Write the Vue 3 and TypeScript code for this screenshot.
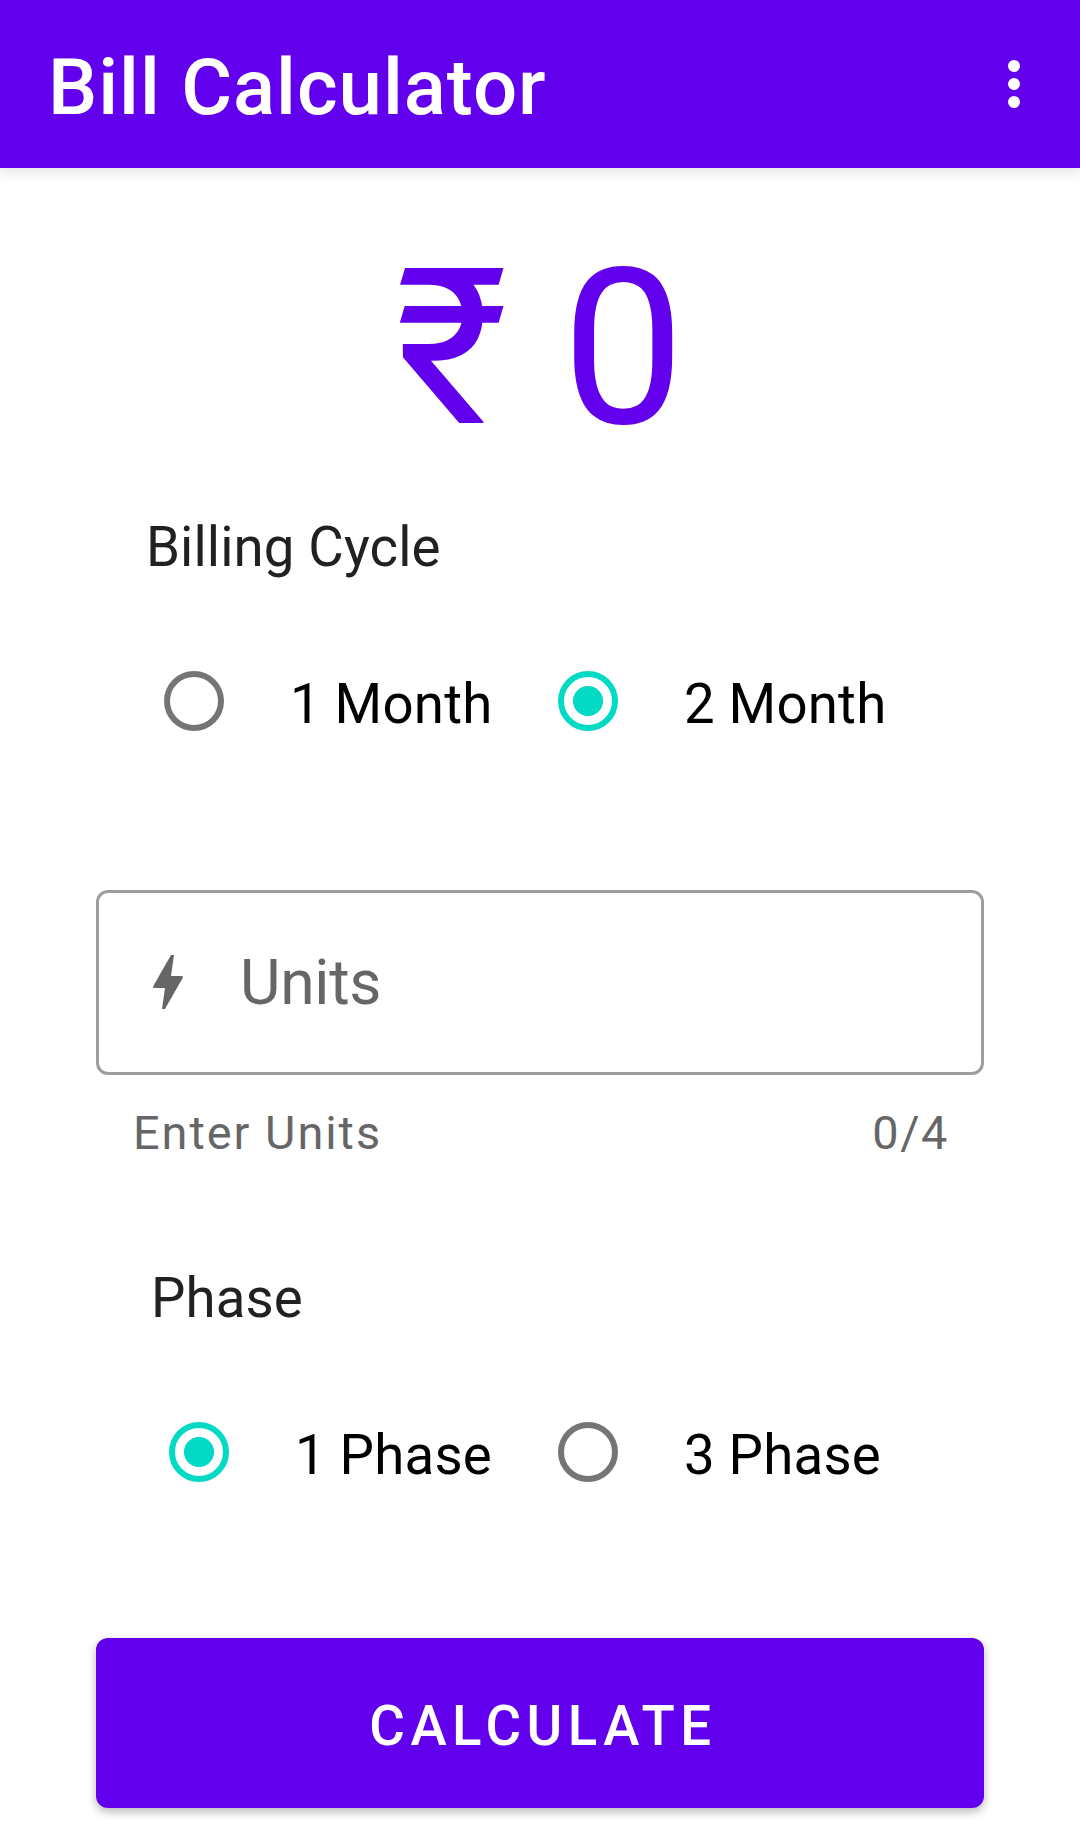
<script setup lang="ts">
import { computed, ref } from 'vue'

interface Choice {
  value: number
  label: string
}

const cycles: Choice[] = [
  { value: 1, label: '1 Month' },
  { value: 2, label: '2 Month' },
]
const phases: Choice[] = [
  { value: 1, label: '1 Phase' },
  { value: 3, label: '3 Phase' },
]

const maxDigits = 4
const cycle = ref(2)
const phase = ref(1)
const units = ref('')
const counter = computed(() => `${units.value.length}/${maxDigits}`)
</script>

<template>
  <div class="screen">
    <header class="app-bar">
      <h1 class="title">Bill Calculator</h1>
      <svg class="overflow" viewBox="0 0 24 24" aria-label="More options">
        <circle cx="12" cy="6" r="2" />
        <circle cx="12" cy="12" r="2" />
        <circle cx="12" cy="18" r="2" />
      </svg>
    </header>

    <main class="content">
      <div class="amount"><span class="currency">₹</span><span class="value">0</span></div>

      <section class="group">
        <h2 class="heading">Billing Cycle</h2>
        <div class="options">
          <label v-for="c in cycles" :key="c.value" class="option">
            <input v-model="cycle" class="radio" type="radio" name="cycle" :value="c.value" />
            <span class="option-label">{{ c.label }}</span>
          </label>
        </div>
      </section>

      <section class="units">
        <label class="field">
          <svg class="bolt" viewBox="0 0 24 24">
            <path
              d="M11 21h-1l1-7H7.5c-.58 0-.57-.32-.38-.66.19-.34.05-.08.07-.12C8.48 10.94 10.42 7.54 13 3h1l-1 7h3.5c.49 0 .56.33.47.51l-.07.15C12.96 17.55 11 21 11 21z"
            />
          </svg>
          <input v-model="units" class="entry" type="text" placeholder="Units" :maxlength="maxDigits" />
        </label>
        <div class="helper">
          <span>Enter Units</span>
          <span class="counter">{{ counter }}</span>
        </div>
      </section>

      <section class="group phase">
        <h2 class="heading">Phase</h2>
        <div class="options">
          <label v-for="p in phases" :key="p.value" class="option">
            <input v-model="phase" class="radio" type="radio" name="phase" :value="p.value" />
            <span class="option-label">{{ p.label }}</span>
          </label>
        </div>
      </section>

      <button class="calculate" type="button">CALCULATE</button>
    </main>
  </div>
</template>

<style>
body {
  margin: 0;
  background: #fff;
}
</style>

<style scoped>
.screen {
  box-sizing: border-box;
  width: 1080px;
  height: 1848px;
  overflow: hidden;
  background: #fff;
  color: #000;
  font-family: Roboto, "Liberation Sans", sans-serif;
}
.app-bar {
  box-sizing: border-box;
  display: flex;
  justify-content: space-between;
  align-items: center;
  height: 168px;
  padding: 0 30px 0 48px;
  background: #6200ee;
  box-shadow: 0 5px 12px rgba(0, 0, 0, 0.11);
}
.title {
  margin: 0;
  padding-top: 7px;
  color: #fff;
  font-size: 78px;
  font-weight: 500;
  letter-spacing: 0.0125em;
  line-height: 92px;
}
.overflow {
  width: 72px;
  height: 72px;
  fill: #fff;
}
.content {
  display: flex;
  flex-direction: column;
  padding: 52px 96px 0;
}
.amount {
  display: flex;
  justify-content: center;
  gap: 54px;
  height: 256px;
  color: #6200ee;
  font-size: 218px;
  line-height: 258px;
}
.group {
  margin-top: 39px;
  padding-left: 50px;
}
.heading {
  margin: 0;
  color: #212121;
  font-size: 54.6px;
  font-weight: 400;
  letter-spacing: 0.1px;
  line-height: 64px;
}
.options {
  display: flex;
  gap: 65.4px;
  height: 60px;
  margin-top: 92px;
  padding-left: 18px;
}
.option {
  display: flex;
  align-items: center;
}
.radio {
  appearance: none;
  flex: none;
  box-sizing: border-box;
  width: 60px;
  height: 60px;
  margin: 0;
  border: 6px solid #757575;
  border-radius: 50%;
}
.radio:checked {
  border-color: #03dac5;
  background: radial-gradient(circle, #03dac5 14.6px, transparent 15.4px);
}
.option-label {
  margin-left: 66px;
  padding-top: 5px;
  font-size: 54.6px;
  letter-spacing: 0.2px;
  line-height: 64px;
}
.units {
  margin-top: 159px;
}
.field {
  box-sizing: border-box;
  display: flex;
  align-items: center;
  height: 185px;
  padding-left: 33px;
  border: 3px solid #9e9e9e;
  border-radius: 12px;
}
.bolt {
  width: 72px;
  height: 72px;
  margin-bottom: 1px;
  fill: #666;
}
.entry {
  flex: 1;
  min-width: 0;
  height: 74px;
  margin: 1px 0 0 36px;
  padding: 0;
  border: 0;
  outline: 0;
  background: transparent;
  color: #212121;
  font: 400 62.4px/74px Roboto, "Liberation Sans", sans-serif;
  letter-spacing: -0.3px;
}
.entry::placeholder {
  color: #666;
  opacity: 1;
}
.helper {
  display: flex;
  justify-content: space-between;
  margin-top: 31px;
  padding: 0 35px 0 37px;
  color: #666;
  font-size: 46.8px;
  letter-spacing: 2px;
  line-height: 54px;
}
.counter {
  letter-spacing: 1.6px;
}
.phase {
  margin-top: 106px;
  padding-left: 55px;
}
.phase .options {
  gap: 66px;
}
.calculate {
  height: 170px;
  margin-top: 156px;
  padding: 5px 0 0 6px;
  border: 0;
  border-radius: 12px;
  background: #6200ee;
  box-shadow: 0 4px 10px rgba(0, 0, 0, 0.28);
  color: #fff;
  font: 500 54.6px/64px Roboto, "Liberation Sans", sans-serif;
  letter-spacing: 5.5px;
}
</style>
